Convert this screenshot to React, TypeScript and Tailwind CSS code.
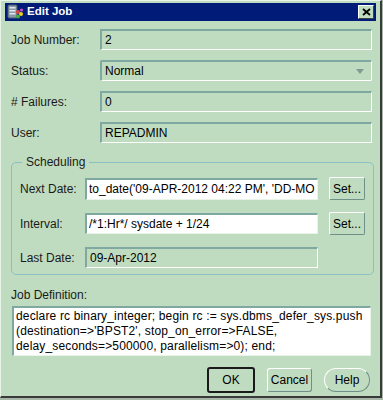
import React from "react";

const font = "font-['Liberation_Sans',Arial,sans-serif]";

const ReadOnlyField = ({ value, className = "" }: { value: string; className?: string }) => (
  <div
    className={`h-[21px] flex items-center px-[3px] border-t-2 border-l-2 border-b border-r border-t-[#7fa8a0] border-l-[#7fa8a0] border-b-white border-r-white bg-[#c0dcc0] text-[12px] text-black ${className}`}
  >
    {value}
  </div>
);

const EditField = ({ value, className = "" }: { value: string; className?: string }) => (
  <div
    className={`h-[21px] flex items-center px-[2px] border-t-2 border-l-2 border-b border-r border-t-[#7fa8a0] border-l-[#7fa8a0] border-b-[#e8f4e8] border-r-[#e8f4e8] bg-white text-[12px] text-black ${className}`}
  >
    <span className="block w-full overflow-hidden whitespace-nowrap">{value}</span>
  </div>
);

const SetButton = () => (
  <button className="w-[36px] h-[23px] rounded-[2px] border border-t-white border-l-white border-b-[#6f8f88] border-r-[#6f8f88] bg-[#c0dcc0] text-[12px] text-black flex items-center justify-center">
    Set...
  </button>
);

const Row = ({ label, children }: { label: string; children: React.ReactNode }) => (
  <div className="flex items-center h-[21px]">
    <span className="w-[89px] text-[12px] text-[#1a1a1a]">{label}</span>
    {children}
  </div>
);

const SubRow = ({ label, children }: { label: string; children: React.ReactNode }) => (
  <div className="flex items-center">
    <span className="w-[65px] text-[12px] text-[#1a1a1a]">{label}</span>
    {children}
  </div>
);

const JobIcon = () => (
  <svg width="17" height="16" viewBox="0 0 17 16">
    <rect x="1" y="1" width="9" height="13" rx="1" fill="#8a9aa8" stroke="#4a5a68" />
    <rect x="2.5" y="3" width="6" height="1.5" fill="#dfe6ee" />
    <rect x="2.5" y="6" width="6" height="1.5" fill="#dfe6ee" />
    <rect x="2.5" y="9" width="6" height="1.5" fill="#dfe6ee" />
    <circle cx="11" cy="8" r="2" fill="#e04040" />
    <circle cx="14" cy="10" r="2" fill="#e8d020" />
    <circle cx="11" cy="12.5" r="2" fill="#40b040" />
    <circle cx="14.5" cy="6" r="1.6" fill="#c050d0" />
  </svg>
);

export default function App() {
  return (
    <div className={`w-[383px] h-[400px] bg-[#a8b8a8] ${font}`}>
      <div className="w-[382px] h-[398px] bg-[#c0dcc0] border-l border-t border-l-[#e8f4e8] border-t-[#e8f4e8] border-r-2 border-b-2 border-r-[#3a3a3a] border-b-[#3a3a3a] pt-[2px] px-[4px] flex flex-col">
        <div className="h-[18px] bg-[#001c78] flex items-center pl-[2px] pr-[2px]">
          <JobIcon />
          <span className="ml-[3px] text-white font-bold text-[11.5px]">Edit Job</span>
          <div className="ml-auto w-[16px] h-[14px] bg-[#c0dcc0] border border-t-white border-l-white border-b-[#404040] border-r-[#404040] flex items-center justify-center">
            <svg width="9" height="8" viewBox="0 0 9 8">
              <path d="M1 1 L8 7 M8 1 L1 7" stroke="#000" strokeWidth="1.8" />
            </svg>
          </div>
        </div>

        <div className="pl-[6px] pr-[4px] pt-[8px] flex flex-col gap-[10px]">
          <Row label="Job Number:">
            <ReadOnlyField value="2" className="flex-1" />
          </Row>
          <Row label="Status:">
            <div className="flex-1 h-[21px] flex items-center justify-between px-[3px] border-t-2 border-l-2 border-b border-r border-t-[#7fa8a0] border-l-[#7fa8a0] border-b-white border-r-white rounded-[2px] text-[12px] text-black">
              <span>Normal</span>
              <svg width="8" height="5" viewBox="0 0 8 5" className="mr-[4px]">
                <path d="M0 0 L8 0 L4 5 Z" fill="#7f9a90" />
              </svg>
            </div>
          </Row>
          <Row label="# Failures:">
            <ReadOnlyField value="0" className="flex-1" />
          </Row>
          <Row label="User:">
            <ReadOnlyField value="REPADMIN" className="flex-1" />
          </Row>
        </div>

        <fieldset className="mt-[10px] ml-[6px] mr-[4px] border border-[#8cc0c0] rounded-[5px] px-[8px] pb-[6px]">
          <legend className="ml-[2px] px-[4px] text-[12px] text-[#1a1a1a]">Scheduling</legend>
          <div className="flex flex-col gap-[12px] pt-[6px]">
            <SubRow label="Next Date:">
              <EditField value="to_date('09-APR-2012 04:22 PM', 'DD-MON-YYYY HH:MI AM')" className="w-[233px] h-[22px]" />
              <div className="ml-[11px]"><SetButton /></div>
            </SubRow>
            <SubRow label="Interval:">
              <EditField value="/*1:Hr*/ sysdate + 1/24" className="w-[233px]" />
              <div className="ml-[11px]"><SetButton /></div>
            </SubRow>
            <SubRow label="Last Date:">
              <ReadOnlyField value="09-Apr-2012" className="w-[233px]" />
            </SubRow>
          </div>
        </fieldset>

        <div className="pl-[6px] mt-[13px] text-[12px] leading-[14px] text-[#1a1a1a]">Job Definition:</div>
        <div className="ml-[7px] mr-[5px] mt-[4px] h-[50px] bg-white border-t-2 border-l-2 border-b border-r border-t-[#7fa8a0] border-l-[#7fa8a0] border-b-[#e8f4e8] border-r-[#e8f4e8] px-[2px] pt-[1px] text-[12px] tracking-[0.15px] leading-[15px] text-black whitespace-nowrap overflow-hidden">
          <div>declare rc binary_integer; begin rc := sys.dbms_defer_sys.push</div>
          <div>(destination=&gt;'BPST2', stop_on_error=&gt;FALSE,</div>
          <div>delay_seconds=&gt;500000, parallelism=&gt;0); end;</div>
        </div>

        <div className="flex justify-end items-center gap-[12px] mt-[11px] mr-[6px]">
          <button className="w-[48px] h-[26px] rounded-[3px] border-2 border-[#1a1a1a] bg-[#c0dcc0] text-[12px] text-black">
            OK
          </button>
          <button className="w-[45px] h-[24px] rounded-[3px] border border-t-white border-l-white border-b-[#6f8f88] border-r-[#6f8f88] bg-[#c0dcc0] text-[12px] text-black">
            Cancel
          </button>
          <button className="w-[46px] h-[24px] rounded-full border border-t-white border-l-white border-b-[#6f8f88] border-r-[#6f8f88] bg-[#c0dcc0] text-[12px] text-black">
            Help
          </button>
        </div>
      </div>
    </div>
  );
}
